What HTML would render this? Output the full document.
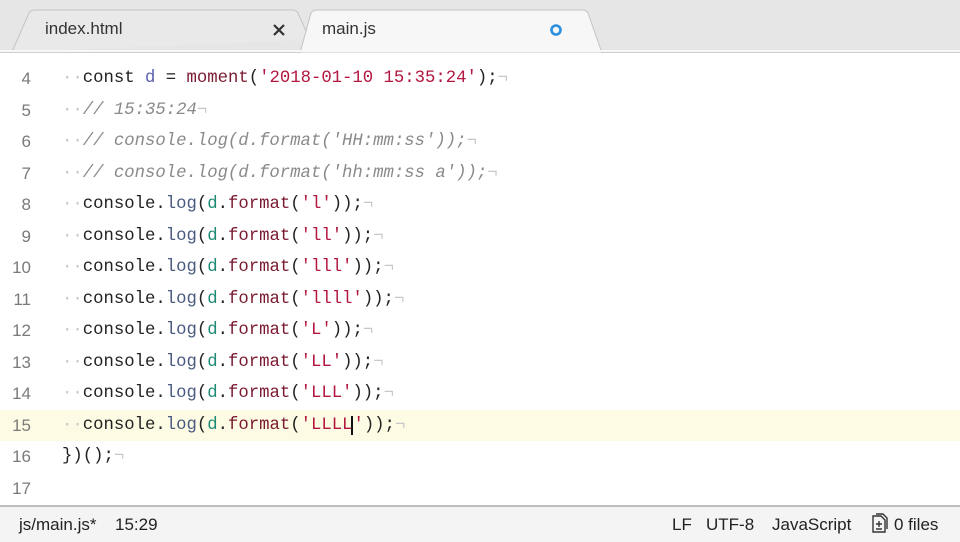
<!DOCTYPE html>
<html><head><meta charset="utf-8"><style>
body{margin:0;width:960px;height:540px;overflow:hidden;background:#fff;font-family:"Liberation Sans",sans-serif;position:relative}
#tabs{position:absolute;left:0;top:0;width:960px;height:53px}
.tt{position:absolute;font-size:17px;color:#333;top:19px}
#code{position:absolute;left:0;top:63px;width:960px;font-family:"Liberation Mono",monospace;font-size:17.3px}
.l{height:31.5px;line-height:31.5px;position:relative;white-space:pre}
.n{position:absolute;right:929px;color:#7a7a7a;font-family:"Liberation Sans",sans-serif;font-size:17px}
.c{position:absolute;left:62px;color:#222}
.hl{background:#fdfbe3}
.w{color:#c8c8c8}
.cm{color:#8a8a8a;font-style:italic}
.s{color:#b2173f}
.f{color:#7a1a30}
.v{color:#5b5fae}
.g{color:#1d8a74}
.lg{color:#4a5a80}
#status{position:absolute;left:0;top:505px;width:960px;height:35px;background:#f4f4f4;border-top:2px solid #bdbdbd;font-size:17px;color:#222}
#status span{position:absolute;top:8px}
</style></head><body>
<svg id="tabs" width="960" height="53">
<rect width="960" height="53" fill="#e6e6e6"/>
<line x1="0" y1="52.5" x2="960" y2="52.5" stroke="#cfcfcf"/>
<path d="M12 52 L29 13 Q31 10 35 10 L292 10 Q296 10 298 13 L310 40" fill="#e9e9e9" stroke="#c4c4c4"/>
<path d="M300 53 L311 13 Q313 10 317 10 L582 10 Q586 10 588 13 L602 53 Z" fill="#f7f7f7" stroke="#c4c4c4"/>
<rect x="0" y="50" width="960" height="2" fill="#f7f7f7"/>
<circle cx="556" cy="30" r="4.5" fill="none" stroke="#2b8fe0" stroke-width="2.6"/>
<path d="M274 25 L284 35 M284 25 L274 35" stroke="#333" stroke-width="2.2"/>
</svg>
<div class="tt" style="left:45px">index.html</div>
<div class="tt" style="left:322px">main.js</div>
<div id="code">
<div class="l"><span class="n">4</span><span class="c"><span class="w">··</span>const <span class="v">d</span> = <span class="f">moment</span>(<span class="s">'2018-01-10 15:35:24'</span>);<span class="w">¬</span></span></div>
<div class="l"><span class="n">5</span><span class="c"><span class="w">··</span><span class="cm">// 15:35:24</span><span class="w">¬</span></span></div>
<div class="l"><span class="n">6</span><span class="c"><span class="w">··</span><span class="cm">// console.log(d.format('HH:mm:ss'));</span><span class="w">¬</span></span></div>
<div class="l"><span class="n">7</span><span class="c"><span class="w">··</span><span class="cm">// console.log(d.format('hh:mm:ss a'));</span><span class="w">¬</span></span></div>
<div class="l"><span class="n">8</span><span class="c"><span class="w">··</span>console.<span class="lg">log</span>(<span class="g">d</span>.<span class="f">format</span>(<span class="s">'l'</span>));<span class="w">¬</span></span></div>
<div class="l"><span class="n">9</span><span class="c"><span class="w">··</span>console.<span class="lg">log</span>(<span class="g">d</span>.<span class="f">format</span>(<span class="s">'ll'</span>));<span class="w">¬</span></span></div>
<div class="l"><span class="n">10</span><span class="c"><span class="w">··</span>console.<span class="lg">log</span>(<span class="g">d</span>.<span class="f">format</span>(<span class="s">'lll'</span>));<span class="w">¬</span></span></div>
<div class="l"><span class="n">11</span><span class="c"><span class="w">··</span>console.<span class="lg">log</span>(<span class="g">d</span>.<span class="f">format</span>(<span class="s">'llll'</span>));<span class="w">¬</span></span></div>
<div class="l"><span class="n">12</span><span class="c"><span class="w">··</span>console.<span class="lg">log</span>(<span class="g">d</span>.<span class="f">format</span>(<span class="s">'L'</span>));<span class="w">¬</span></span></div>
<div class="l"><span class="n">13</span><span class="c"><span class="w">··</span>console.<span class="lg">log</span>(<span class="g">d</span>.<span class="f">format</span>(<span class="s">'LL'</span>));<span class="w">¬</span></span></div>
<div class="l"><span class="n">14</span><span class="c"><span class="w">··</span>console.<span class="lg">log</span>(<span class="g">d</span>.<span class="f">format</span>(<span class="s">'LLL'</span>));<span class="w">¬</span></span></div>
<div class="l hl"><span class="n">15</span><span class="c"><span class="w">··</span>console.<span class="lg">log</span>(<span class="g">d</span>.<span class="f">format</span>(<span class="s">'LLLL<span style="border-left:2px solid #111;margin-left:-1px"></span>'</span>));<span class="w">¬</span></span></div>
<div class="l"><span class="n">16</span><span class="c">})();<span class="w">¬</span></span></div>
<div class="l"><span class="n">17</span></div>
</div>
<div id="status">
<span style="left:19px">js/main.js*</span>
<span style="left:115px">15:29</span>
<span style="left:672px">LF</span>
<span style="left:706px">UTF-8</span>
<span style="left:772px">JavaScript</span>
<svg style="position:absolute;left:868px;top:6px" width="20" height="22"><path d="M5 3 H13 L17 7 V19 H5 Z M8 1 H15 L19 5 V16" fill="none" stroke="#333" stroke-width="1.4"/><path d="M8 11 H14 M11 8 V14 M8 16 H14" stroke="#333" stroke-width="1.4"/></svg>
<span style="left:894px">0 files</span>
</div>
</body></html>
